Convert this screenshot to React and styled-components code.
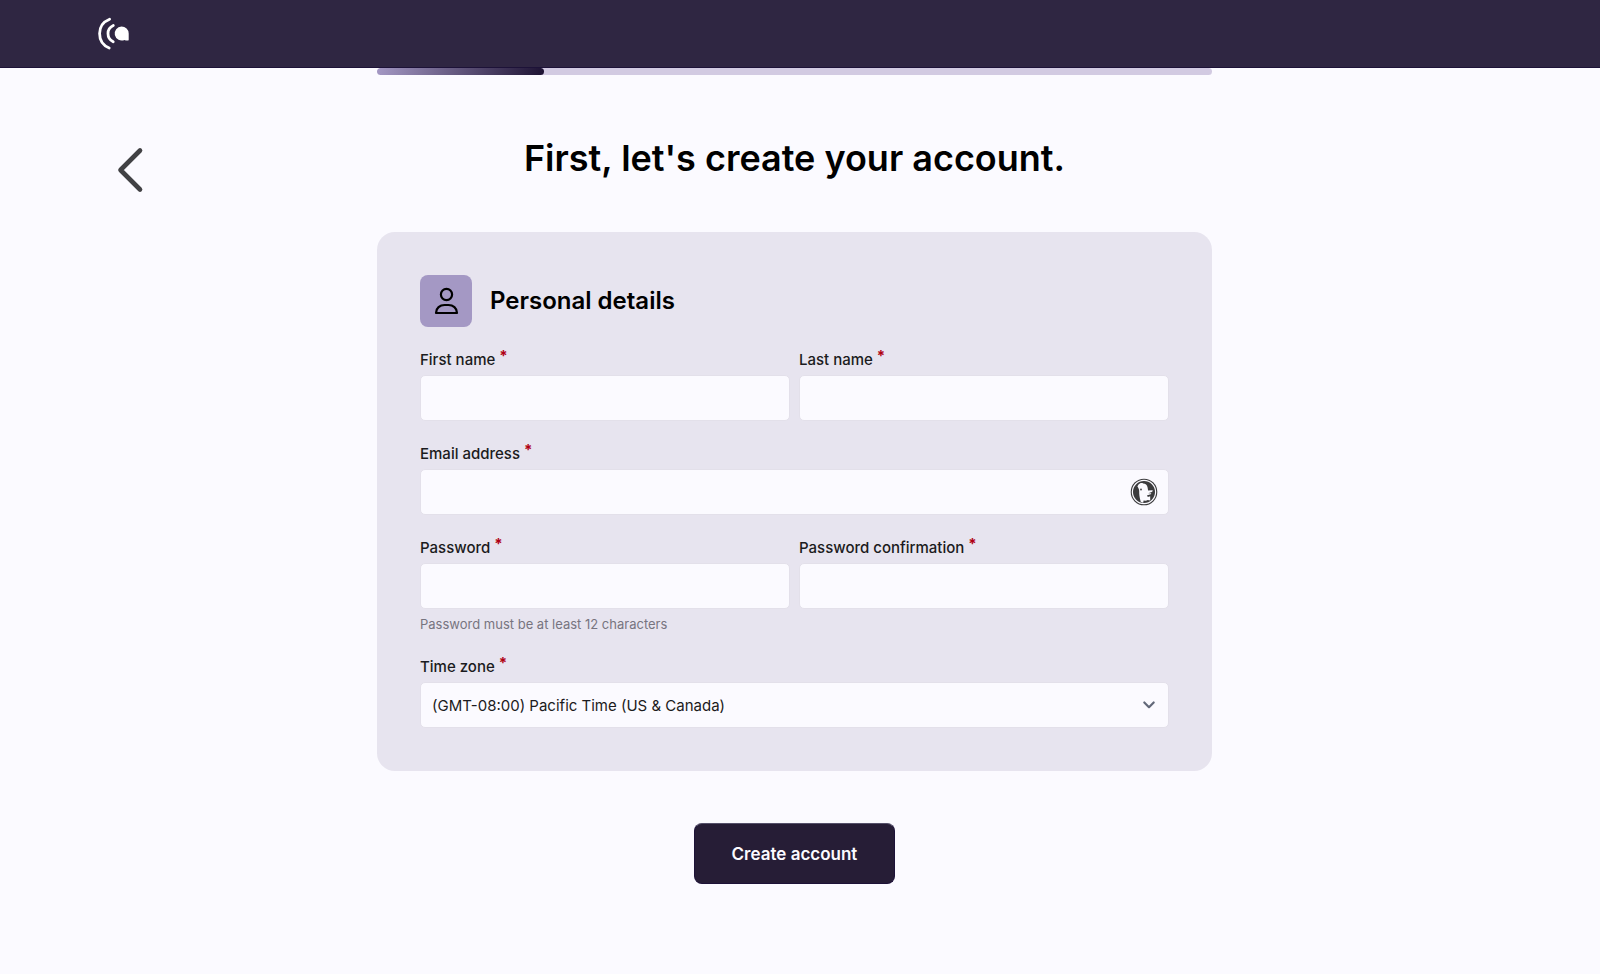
import React from "react";
import styled, { createGlobalStyle } from "styled-components";

const GlobalStyle = createGlobalStyle`
  *, *::before, *::after { box-sizing: border-box; }
  body {
    margin: 0;
    background: #fbfaff;
    color: #000;
    font-family: Inter, "Liberation Sans", sans-serif;
    -webkit-font-smoothing: antialiased;
  }
  button, input, select { font: inherit; color: inherit; }
`;

const Header = styled.header`
  display: flex;
  align-items: center;
  height: 68px;
  padding: 0 98px;
  background: #2f2642;
  border-bottom: 1px solid #1d1238;
`;

const HomeLink = styled.a`
  display: flex;
  svg { display: block; }
`;

const Page = styled.main`
  display: grid;
  grid-template-columns: minmax(64px, 1fr) minmax(0, 835px) minmax(0, 1fr);
  padding: 0 109px 64px 98px;
`;

const BackButton = styled.button`
  display: flex;
  align-items: center;
  justify-content: center;
  width: 64px;
  height: 64px;
  margin-top: 70px;
  padding: 0;
  border: 0;
  background: none;
  cursor: pointer;
`;

const Column = styled.div`
  display: flex;
  flex-direction: column;
`;

const Progress = styled.div`
  height: 7px;
  border-radius: 4px;
  background: #d2cae2;
  overflow: hidden;
`;

const ProgressFill = styled.div`
  height: 100%;
  border-radius: 4px;
  background: linear-gradient(100deg, #a498c4, #1d1233);
`;

const Title = styled.h1`
  margin: 59px 0 50px;
  font-size: 36px;
  line-height: 48px;
  font-weight: 600;
  text-align: center;
`;

const Form = styled.form`
  display: flex;
  flex-direction: column;
  align-items: center;
  gap: 52px;
`;

const Card = styled.section`
  display: flex;
  flex-direction: column;
  gap: 22px;
  width: 100%;
  padding: 43px;
  border-radius: 18px;
  background: #e7e4ef;
`;

const CardHeader = styled.div`
  display: flex;
  align-items: center;
  gap: 18px;
`;

const IconTile = styled.span`
  display: flex;
  align-items: center;
  justify-content: center;
  width: 52px;
  height: 52px;
  border-radius: 8px;
  background: #a498c4;
`;

const CardTitle = styled.h2`
  margin: 0;
  font-size: 24px;
  line-height: 32px;
  font-weight: 600;
`;

const Row = styled.div`
  display: grid;
  grid-template-columns: repeat(${(p) => p.$columns || 1}, minmax(0, 1fr));
  gap: 9px;
`;

const Field = styled.div`
  display: flex;
  flex-direction: column;
`;

const Label = styled.label`
  margin-bottom: 4px;
  font-size: 15px;
  line-height: 22px;
  font-weight: 500;
  color: #1b1b20;
`;

const Required = styled.span`
  margin-left: 4px;
  color: #b00012;
  font-weight: 700;
  line-height: 0;
  vertical-align: 4px;
`;

const Control = styled.div`
  position: relative;
`;

const Input = styled.input`
  display: block;
  width: 100%;
  height: 46px;
  padding: 0 12px;
  border: 1px solid #e3e0ea;
  border-radius: 5px;
  background: #fbfaff;
  font-size: 15px;
`;

const Select = styled.select`
  display: block;
  width: 100%;
  height: 46px;
  padding: 0 40px 0 11px;
  border: 1px solid #e3e0ea;
  border-radius: 5px;
  background: #fbfaff;
  font-size: 15px;
  color: #1b1b20;
  appearance: none;
`;

const Adornment = styled.span`
  position: absolute;
  top: 0;
  bottom: 0;
  right: ${(p) => p.$inset}px;
  display: flex;
  align-items: center;
  pointer-events: none;
`;

const Hint = styled.p`
  margin: 5px 0 0;
  font-size: 13px;
  line-height: 20px;
  color: #77747f;
`;

const SubmitButton = styled.button`
  height: 61px;
  padding: 0 37px;
  border: 1px solid #1d1238;
  border-top-color: #55506a;
  border-radius: 8px;
  background: #261d36;
  color: #fbfaff;
  font-size: 17px;
  font-weight: 600;
  cursor: pointer;
`;

function LogoIcon() {
  return (
    <svg width="32" height="33" viewBox="0 0 32 33" fill="none" aria-hidden="true">
      <path d="M11.600 2.200C5.200 4.800 1.600 10 1.600 16.500S5 28.400 11.200 31" stroke="#fff" strokeWidth="2.800" strokeLinecap="round" />
      <path d="M15.300 8.500C11.600 10.200 10 13 10 16.500s1.700 6.500 5.200 8.300" stroke="#fff" strokeWidth="2.800" strokeLinecap="round" />
      <path d="M23.500 9.500a7 7 0 1 0 3 13.400c1.500 .8 2.900 .8 4.200 .4V16.500a7.200 7 0 0 0-7.200-7Z" fill="#fff" />
    </svg>
  );
}

function BackIcon() {
  return (
    <svg width="28" height="48" viewBox="0 0 28 48" fill="none" aria-hidden="true">
      <path d="M24 4.500 4.500 24 24 43.500" stroke="#414144" strokeWidth="4.600" strokeLinecap="round" strokeLinejoin="round" />
    </svg>
  );
}

function PersonIcon() {
  return (
    <svg width="26" height="28" viewBox="0 0 26 28" fill="none" stroke="#000" strokeWidth="2.200" aria-hidden="true">
      <circle cx="13.500" cy="7.500" r="5.600" />
      <path d="M3 26c0-5 4-8 8.500-8h4c4.500 0 8.500 3 8.500 8Z" strokeLinejoin="round" />
    </svg>
  );
}

function DuckIcon() {
  return (
    <svg width="28" height="28" viewBox="0 0 28 28" aria-hidden="true">
      <circle cx="14" cy="14" r="13.300" fill="#3b3b3d" />
      <circle cx="14" cy="14" r="11.600" fill="none" stroke="#fbfaff" strokeWidth="1.200" />
      <path d="M8.300 6.700c1.400-1.500 3.300-2 4.900-1.200 2.200 .1 4 1.500 4.400 3.900l.5 3.100 4.200-.2c.8 .4 .5 1.200-.6 1.700l-3.500 1.200 2.900 .1c.5 .7-.4 1.400-2.700 1.600l-1.200 .1 .5 2 2.500-.8v4.400l-2.400-.7-1.900 .8-2.300-.3-.4 2.300-2.500-1c-1.200-4.400-1.600-7.400-1.500-10.400 0-1.900-.8-3.400-1.800-4.700Z" fill="#fbfaff" />
      <circle cx="11" cy="11.500" r=".9" fill="#3b3b3d" />
    </svg>
  );
}

function ChevronIcon() {
  return (
    <svg width="14" height="10" viewBox="0 0 14 10" fill="none" aria-hidden="true">
      <path d="m2.300 2.500 4.700 4.700 4.700-4.700" stroke="#626879" strokeWidth="2.200" strokeLinecap="round" strokeLinejoin="round" />
    </svg>
  );
}

function FieldLabel({ htmlFor, children }) {
  return (
    <Label htmlFor={htmlFor}>
      {children}
      <Required aria-hidden="true">*</Required>
    </Label>
  );
}

function TextField({ id, label, type = "text", hint, adornment }) {
  return (
    <Field>
      <FieldLabel htmlFor={id}>{label}</FieldLabel>
      <Control>
        <Input id={id} name={id} type={type} required />
        {adornment && <Adornment $inset={11}>{adornment}</Adornment>}
      </Control>
      {hint && <Hint>{hint}</Hint>}
    </Field>
  );
}

export default function App() {
  return (
    <>
      <GlobalStyle />
      <Header>
        <HomeLink href="#" aria-label="Home">
          <LogoIcon />
        </HomeLink>
      </Header>
      <Page>
        <BackButton type="button" aria-label="Back">
          <BackIcon />
        </BackButton>
        <Column>
          <Progress role="progressbar" aria-label="Sign-up progress" aria-valuenow={20}>
            <ProgressFill style={{ width: "20%" }} />
          </Progress>
          <Title>First, let's create your account.</Title>
          <Form onSubmit={(e) => e.preventDefault()}>
            <Card>
              <CardHeader>
                <IconTile>
                  <PersonIcon />
                </IconTile>
                <CardTitle>Personal details</CardTitle>
              </CardHeader>
              <Row $columns={2}>
                <TextField id="first-name" label="First name" />
                <TextField id="last-name" label="Last name" />
              </Row>
              <Row>
                <TextField id="email" label="Email address" type="email" adornment={<DuckIcon />} />
              </Row>
              <Row $columns={2}>
                <TextField
                  id="password"
                  label="Password"
                  type="password"
                  hint="Password must be at least 12 characters"
                />
                <TextField id="password-confirmation" label="Password confirmation" type="password" />
              </Row>
              <Field>
                <FieldLabel htmlFor="time-zone">Time zone</FieldLabel>
                <Control>
                  <Select id="time-zone" defaultValue="pacific">
                    <option value="pacific">(GMT-08:00) Pacific Time (US &amp; Canada)</option>
                  </Select>
                  <Adornment $inset={13}>
                    <ChevronIcon />
                  </Adornment>
                </Control>
              </Field>
            </Card>
            <SubmitButton type="submit">Create account</SubmitButton>
          </Form>
        </Column>
      </Page>
    </>
  );
}
